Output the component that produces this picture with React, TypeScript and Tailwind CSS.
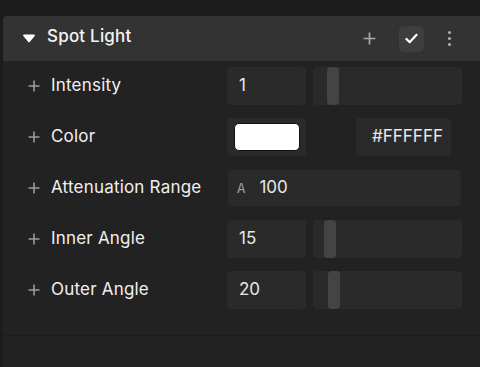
import React from "react";

function PlusIcon({ className = "" }: { className?: string }) {
  return (
    <svg viewBox="0 0 12 12" className={className} fill="none" stroke="currentColor" strokeWidth={1.6}>
      <path d="M6 0.5v11M0.5 6h11" />
    </svg>
  );
}

function Slider({ pos }: { pos: number }) {
  return (
    <div className="relative h-[38px] w-[149px] rounded-[4px] bg-[#2a2a2a]">
      <div
        className="absolute top-0 h-[38px] w-[12px] rounded-[4px] bg-[#444444]"
        style={{ left: pos }}
      />
    </div>
  );
}

function NumBox({ value }: { value: string }) {
  return (
    <div className="flex h-[38px] w-[79px] items-center rounded-[4px] bg-[#2a2a2a] pl-[12px] text-[17px] text-[#e8e8e8]">
      {value}
    </div>
  );
}

function Row({ label, children }: { label: string; children: React.ReactNode }) {
  return (
    <div className="flex h-[38px] items-center">
      <div className="flex w-[224px] items-center pl-[25px]">
        <PlusIcon className="h-[12px] w-[12px] text-[#9c9c9c]" />
        <span className="ml-[11px] text-[17px] tracking-[0.2px] text-[#f0f0f0]">{label}</span>
      </div>
      {children}
    </div>
  );
}

export default function App() {
  return (
    <div
      className="flex h-[367px] w-[480px] flex-col bg-[#1c1c1c] pt-[16px]"
      style={{ fontFamily: "Inter, 'Noto Sans', sans-serif" }}
    >
      <div className="ml-[3px] flex flex-1 flex-col overflow-hidden rounded-tl-[4px]">
        {/* header */}
        <div className="flex h-[45px] shrink-0 items-center bg-[#333333] pl-[20px]">
          <svg viewBox="0 0 12 9" className="h-[9px] w-[12px] text-white" fill="currentColor">
            <path d="M1 0.5h10c0.8 0 1.2 0.9 0.7 1.5L6.7 8c-0.4 0.5-1 0.5-1.4 0L0.3 2C-0.2 1.4 0.2 0.5 1 0.5z" />
          </svg>
          <span className="mb-[3px] ml-[12px] text-[17px] font-medium tracking-[0.2px] text-[#f4f4f4]">Spot Light</span>
          <div className="ml-auto flex items-center">
            <PlusIcon className="h-[13px] w-[13px] text-[#a8a8a8]" />
            <div className="ml-[23px] flex h-[26px] w-[25px] items-center justify-center rounded-[5px] bg-[#3e3e3e]">
              <svg viewBox="0 0 14 12" className="h-[11px] w-[13px]" fill="none" stroke="white" strokeWidth={2.4} strokeLinecap="round" strokeLinejoin="round">
                <path d="M1.5 6.5l3.5 3.5 7.5-8" />
              </svg>
            </div>
            <div className="ml-[24px] mr-[29px] flex flex-col gap-[3px]">
              <div className="h-[3px] w-[3px] rounded-full bg-[#b0b0b0]" />
              <div className="h-[3px] w-[3px] rounded-full bg-[#b0b0b0]" />
              <div className="h-[3px] w-[3px] rounded-full bg-[#b0b0b0]" />
            </div>
          </div>
        </div>

        {/* body */}
        <div className="flex shrink-0 flex-col gap-[13px] bg-[#222222] pb-[26px] pt-[6px]">
          <Row label="Intensity">
            <NumBox value="1" />
            <div className="ml-[7px]">
              <Slider pos={14} />
            </div>
          </Row>
          <Row label="Color">
            <div className="flex h-[38px] w-[79px] items-center justify-center rounded-[4px] bg-[#2a2a2a]">
              <div className="h-[28px] w-[66px] rounded-[5px] border border-[#111] bg-white" />
            </div>
            <div className="ml-[50px] flex h-[38px] w-[95px] items-center rounded-[4px] bg-[#2a2a2a] pl-[16px] text-[17px] text-[#e8e8e8]">
              #FFFFFF
            </div>
          </Row>
          <Row label="Attenuation Range">
            <div className="ml-[1px] flex h-[36px] w-[233px] items-center rounded-[4px] bg-[#2a2a2a] pl-[9px]">
              <span className="text-[14px] text-[#9a9a9a]" style={{ fontFamily: "'DejaVu Sans Mono', monospace" }}>
                A
              </span>
              <span className="ml-[14px] text-[17px] text-[#e8e8e8]">100</span>
            </div>
          </Row>
          <Row label="Inner Angle">
            <NumBox value="15" />
            <div className="ml-[7px]">
              <Slider pos={11} />
            </div>
          </Row>
          <Row label="Outer Angle">
            <NumBox value="20" />
            <div className="ml-[7px]">
              <Slider pos={15} />
            </div>
          </Row>
        </div>
        <div className="flex-1 border-t border-[#1b1b1b] bg-[#212121]" />
      </div>
    </div>
  );
}
